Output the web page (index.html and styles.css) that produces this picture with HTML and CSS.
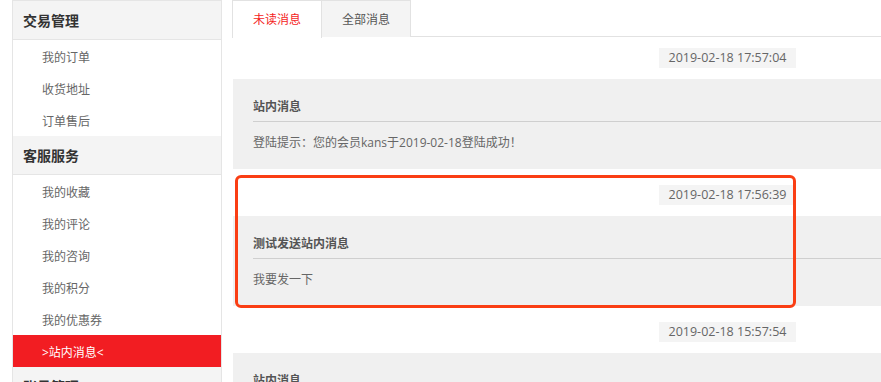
FILE: index.html
```html
<!DOCTYPE html>
<html lang="zh-CN">
<head>
<meta charset="utf-8">
<title>站内消息</title>
<link rel="stylesheet" href="styles.css">
</head>
<body>
<div class="page">
  <aside class="sidebar">
    <div class="group">
      <h3 class="group-title">交易管理</h3>
      <ul class="menu">
        <li class="menu-item">我的订单</li>
        <li class="menu-item">收货地址</li>
        <li class="menu-item">订单售后</li>
      </ul>
    </div>
    <div class="group">
      <h3 class="group-title">客服服务</h3>
      <ul class="menu">
        <li class="menu-item">我的收藏</li>
        <li class="menu-item">我的评论</li>
        <li class="menu-item">我的咨询</li>
        <li class="menu-item">我的积分</li>
        <li class="menu-item">我的优惠券</li>
        <li class="menu-item active">&gt;站内消息&lt;</li>
      </ul>
    </div>
    <div class="group">
      <h3 class="group-title">账号管理</h3>
      <ul class="menu">
        <li class="menu-item">个人资料</li>
        <li class="menu-item">修改密码</li>
      </ul>
    </div>
  </aside>

  <main class="main">
    <div class="tabs">
      <div class="tab active">未读消息</div>
      <div class="tab">全部消息</div>
    </div>
    <div class="msg-list">
      <div class="msg">
        <div class="msg-time-row"><span class="msg-time">2019-02-18 17:57:04</span></div>
        <div class="msg-body">
          <div class="msg-title">站内消息</div>
          <div class="msg-text">登陆提示：您的会员kans于2019-02-18登陆成功！</div>
        </div>
      </div>
      <div class="msg">
        <div class="msg-time-row"><span class="msg-time">2019-02-18 17:56:39</span></div>
        <div class="msg-body">
          <div class="msg-title">测试发送站内消息</div>
          <div class="msg-text">我要发一下</div>
        </div>
      </div>
      <div class="msg">
        <div class="msg-time-row"><span class="msg-time">2019-02-18 15:57:54</span></div>
        <div class="msg-body">
          <div class="msg-title">站内消息</div>
          <div class="msg-text">登陆提示：您的会员kans于2019-02-18登陆成功！</div>
        </div>
      </div>
    </div>
  </main>

  <div class="highlight"></div>
</div>
</body>
</html>
```

FILE: styles.css
```css
html, body {
  margin: 0;
  padding: 0;
  overflow: hidden;
  background: #fff;
}

body {
  font-family: "Open Sans", "Noto Sans CJK SC", sans-serif;
  font-size: 12px;
  color: #666;
}

.page {
  position: relative;
  display: flex;
  align-items: flex-start;
  padding-left: 12px;
  width: 1400px;
}

/* Sidebar */
.sidebar {
  flex: 0 0 auto;
  width: 208px;
  border: 1px solid #e5e5e5;
  border-top: 0;
  background: #fff;
}

.group-title {
  margin: 0;
  box-sizing: border-box;
  height: 38px;
  padding: 2px 0 0 10px;
  line-height: 36px;
  background: #f4f4f4;
  border-bottom: 1px solid #e5e5e5;
  font-size: 14px;
  font-weight: bold;
  color: #333;
  box-sizing: content-box;
  height: 36px;
}

.group:first-child .group-title {
  border-top: 1px solid #e5e5e5;
}

.menu {
  list-style: none;
  margin: 0;
  padding: 0;
}

.menu-item {
  height: 28px;
  line-height: 28px;
  padding: 4px 0 0 29px;
  font-size: 12px;
  color: #666;
}

.menu-item.active {
  background: #f21d22;
  color: #fff;
}

/* Main */
.main {
  flex: 0 0 auto;
  width: 990px;
  margin-left: 10px;
}

.tabs {
  display: flex;
  height: 36px;
  border-bottom: 1px solid #e2e2e2;
}

.tab {
  width: 88px;
  height: 35px;
  padding-top: 1px;
  line-height: 35px;
  border: 1px solid #e2e2e2;
  border-bottom: 0;
  background: #f4f4f4;
  text-align: center;
  font-size: 12px;
  color: #555;
  margin-bottom: -1px;
}

.tab + .tab {
  margin-left: -1px;
}

.tab.active {
  background: #fff;
  color: #f41d1d;
  height: 36px;
}

.msg-list {
  padding-left: 1px;
}

.msg {
  padding-top: 16px;
}

.msg:first-child {
  padding-top: 11px;
}

.msg-time-row {
  display: flex;
  justify-content: center;
  margin-bottom: 11px;
}

.msg-time {
  display: block;
  height: 20px;
  line-height: 20px;
  padding: 0 10px;
  background: #f4f4f4;
  color: #666;
  font-size: 12.5px;
}

.msg-body {
  background: #f0f0f0;
  padding: 17px 0 17px 20px;
}

.msg-title {
  height: 19px;
  padding-top: 1px;
  line-height: 19px;
  padding-bottom: 5px;
  border-bottom: 1px solid #cfcfcf;
  font-weight: bold;
  color: #555;
}

.msg-text {
  margin-top: 12px;
  height: 18px;
  line-height: 18px;
  color: #666;
}

/* annotation overlay */
.highlight {
  position: absolute;
  left: 235px;
  top: 175px;
  width: 555px;
  height: 127px;
  border: 3px solid #fa3e14;
  border-radius: 6px;
  pointer-events: none;
}
```
